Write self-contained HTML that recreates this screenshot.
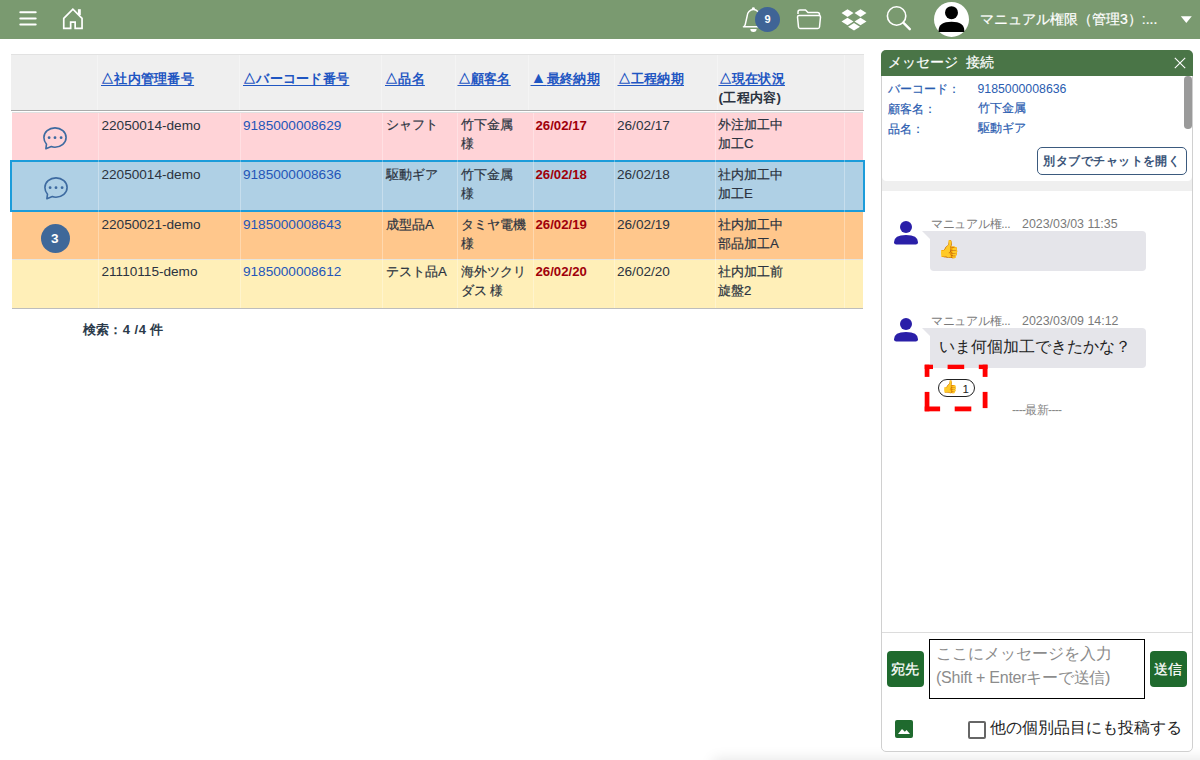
<!DOCTYPE html>
<html><head><meta charset="utf-8">
<style>
*{box-sizing:border-box}
html,body{margin:0;padding:0;width:1200px;height:760px;overflow:hidden;background:#fff;font-family:"Liberation Sans",sans-serif;color:#333}
.j,.jt{-webkit-text-stroke:0.2px currentColor}
.a{position:absolute}
#hdr{position:absolute;left:0;top:0;width:1200px;height:38.6px;background:#7a9a70}
.t{position:absolute;font-size:13.6px;line-height:18px;white-space:nowrap;color:#2b3340}
.j{font-size:13.2px;line-height:18.8px}
.hd{position:absolute;font-size:13.4px;letter-spacing:0.3px;line-height:19px;white-space:nowrap;font-weight:bold}
.hl{color:#1f56c2;text-decoration:underline;text-underline-offset:2px}
.lnk{color:#2356b8}
.red{color:#a0000a;font-weight:bold;font-size:13.2px}
.vs{position:absolute;width:1px;background:rgba(255,255,255,.3)}
.hs{position:absolute;width:1px;background:rgba(255,255,255,.3)}
</style></head><body>
<div id="hdr"></div>
<svg class="a" style="left:0;top:0" width="1200" height="39" viewBox="0 0 1200 39">
  <!-- hamburger -->
  <g stroke="#fff" stroke-width="2" stroke-linecap="round">
    <path d="M20.3 12.3 H35.7 M20.3 18.4 H35.7 M20.3 24.6 H35.7"/>
  </g>
  <!-- home -->
  <path d="M63.75 18.3 L72.9 9.1 L82.05 18.3 V28.35 H75.15 V22.1 H70.65 V28.35 H63.75 Z" fill="none" stroke="#fff" stroke-width="1.7" stroke-linejoin="miter"/>
  <rect x="77.9" y="9.2" width="2.9" height="5.8" fill="#fff"/>
  <!-- bell -->
  <path d="M747.2 15.8 A6.2 6.2 0 0 1 759.6 15.8 L761.6 24.6 Q762 26.3 763.4 26.85 H743.4 Q744.8 26.3 745.2 24.6 Z" fill="none" stroke="#fff" stroke-width="1.5" stroke-linejoin="round"/>
  <path d="M750.3 29.1 H756.6 A3.15 2.9 0 0 1 750.3 29.1 Z" fill="#fff"/>
  <ellipse cx="753.4" cy="8.4" rx="1.5" ry="1.2" fill="#fff"/>
  <!-- folder -->
  <path d="M798 14 V12 Q798 10 800 10 H805.5 L808 12.5 H817.5 Q819.5 12.5 819.5 14.5 V15.5" fill="none" stroke="#fff" stroke-width="1.5"/>
  <path d="M797.5 17 Q797.5 15.5 799 15.5 H819 Q820.5 15.5 820.5 17 L819.5 27 Q819.3 28.5 817.8 28.5 H800.2 Q798.7 28.5 798.5 27 Z" fill="none" stroke="#fff" stroke-width="1.5"/>
  <!-- dropbox -->
  <path d="M847.5 9.3 L853.5 13.1 L847.5 16.9 L841.5 13.1 Z M860.5 9.3 L866.5 13.1 L860.5 16.9 L854.5 13.1 Z M847.5 17.7 L853.5 21.5 L847.5 25.3 L841.5 21.5 Z M860.5 17.7 L866.5 21.5 L860.5 25.3 L854.5 21.5 Z M854 23 L860 26.8 L854 30.6 L848 26.8 Z" fill="#fff"/>
  <!-- search -->
  <circle cx="896.6" cy="16" r="9.2" fill="none" stroke="#fff" stroke-width="1.6"/>
  <path d="M903.3 22.7 L909.8 29.2" stroke="#fff" stroke-width="2.4" stroke-linecap="round"/>
  <!-- avatar -->
  <circle cx="951.5" cy="19.4" r="17.5" fill="#fff"/>
  <circle cx="951.5" cy="12.7" r="6.5" fill="#000"/>
  <path d="M938.6 32 V30.5 Q938.6 21.8 951.5 21.8 Q964.3 21.8 964.3 30.5 V32 Z" fill="#000"/>
  <!-- dropdown -->
  <path d="M1180.8 16.3 H1191.8 L1186.3 22.9 Z" fill="#fff"/>
</svg>
<div class="a" style="left:755px;top:7px;width:25px;height:25px;border-radius:50%;background:#3f6496;color:#fff;font-weight:bold;font-size:11px;line-height:25px;text-align:center">9</div>
<div class="a jt" style="left:980px;top:9px;font-size:14px;line-height:20px;color:#fff;white-space:nowrap">マニュアル権限（管理3）:...</div>

<!-- ===== TABLE ===== -->
<div class="a" style="left:11px;top:54px;width:853px;height:57px;background:#efefef;border-top:1px solid #e2e2e2;border-bottom:1px solid #ababab"></div>
<div class="vs" style="left:97px;top:55px;height:55px"></div>
<div class="vs" style="left:239px;top:55px;height:55px"></div>
<div class="vs" style="left:381px;top:55px;height:55px"></div>
<div class="vs" style="left:454.5px;top:55px;height:55px"></div>
<div class="vs" style="left:527.5px;top:55px;height:55px"></div>
<div class="vs" style="left:614px;top:55px;height:55px"></div>
<div class="vs" style="left:716.5px;top:55px;height:55px"></div>
<div class="vs" style="left:843.5px;top:55px;height:55px"></div>
<div class="hd" style="left:101px;top:68.5px"><span class="hl">△社内管理番号</span></div>
<div class="hd" style="left:243px;top:68.5px"><span class="hl">△バーコード番号</span></div>
<div class="hd" style="left:385px;top:68.5px"><span class="hl">△品名</span></div>
<div class="hd" style="left:457.5px;top:68.5px"><span class="hl">△顧客名</span></div>
<div class="hd" style="left:530.5px;top:68.5px"><span class="hl"><span style="font-size:16px;line-height:10px">▲</span>最終納期</span></div>
<div class="hd" style="left:617.5px;top:68.5px"><span class="hl">△工程納期</span></div>
<div class="hd" style="left:718.5px;top:68.5px"><span class="hl">△現在状況</span><br><span style="color:#2b3340">(工程内容)</span></div>

<!-- rows -->
<div class="a" style="left:12px;top:112px;width:851px;height:48px;background:#ffd3d7;border-top:1px solid #dfe1e1"></div>
<div class="a" style="left:12px;top:212px;width:851px;height:47px;background:#ffc78c"></div>
<div class="a" style="left:12px;top:259px;width:851px;height:50px;background:#ffefb8;border-top:1px solid #e6e4dc;border-bottom:1.5px solid #bdbdbd"></div>
<div class="a" style="left:10px;top:160px;width:854.5px;height:52.2px;background:#afd0e5;border:2.7px solid #1c9cda"></div>
<div class="hs" style="left:98px;top:113px;height:195px"></div>
<div class="hs" style="left:239.5px;top:113px;height:195px"></div>
<div class="hs" style="left:382px;top:113px;height:195px"></div>
<div class="hs" style="left:457px;top:113px;height:195px"></div>
<div class="hs" style="left:532.5px;top:113px;height:195px"></div>
<div class="hs" style="left:614px;top:113px;height:195px"></div>
<div class="hs" style="left:715px;top:113px;height:195px"></div>
<div class="hs" style="left:844px;top:113px;height:195px"></div>

<!-- chat icons -->
<svg class="a" style="left:42px;top:126px" width="27" height="25" viewBox="0 0 27 25">
  <path d="M13 1.9 C19.1 1.9 24.1 6.2 24.1 11.6 C24.1 17 19.1 21.3 13 21.3 C11.7 21.3 10.5 21.15 9.3 20.6 L3.9 22.7 L4.5 18.2 C2.8 16.4 1.9 14.1 1.9 11.6 C1.9 6.2 6.9 1.9 13 1.9 Z" fill="none" stroke="#3d6aa0" stroke-width="1.6" stroke-linejoin="round"/>
  <circle cx="7.1" cy="11.7" r="1.4" fill="#3d6aa0"/><circle cx="13" cy="11.7" r="1.4" fill="#3d6aa0"/><circle cx="19.1" cy="11.7" r="1.4" fill="#3d6aa0"/>
</svg>
<svg class="a" style="left:43px;top:176px" width="27" height="25" viewBox="0 0 27 25">
  <path d="M13 1.9 C19.1 1.9 24.1 6.2 24.1 11.6 C24.1 17 19.1 21.3 13 21.3 C11.7 21.3 10.5 21.15 9.3 20.6 L3.9 22.7 L4.5 18.2 C2.8 16.4 1.9 14.1 1.9 11.6 C1.9 6.2 6.9 1.9 13 1.9 Z" fill="none" stroke="#3d6aa0" stroke-width="1.6" stroke-linejoin="round"/>
  <circle cx="7.1" cy="11.7" r="1.4" fill="#3d6aa0"/><circle cx="13" cy="11.7" r="1.4" fill="#3d6aa0"/><circle cx="19.1" cy="11.7" r="1.4" fill="#3d6aa0"/>
</svg>
<div class="a" style="left:41px;top:224px;width:29px;height:29px;border-radius:50%;background:#3f6899;color:#fff;font-size:13.6px;line-height:29px;text-align:center;font-weight:bold;padding-right:1.5px">3</div>

<!-- row 1 -->
<div class="t" style="left:101.5px;top:116.5px">22050014-demo</div>
<div class="t lnk" style="left:243px;top:116.5px">9185000008629</div>
<div class="t j" style="left:386px;top:116.4px">シャフト</div>
<div class="t j" style="left:460.5px;top:116.4px">竹下金属<br>様</div>
<div class="t red" style="left:535.5px;top:116.5px">26/02/17</div>
<div class="t" style="left:617px;top:116.5px">26/02/17</div>
<div class="t j" style="left:718px;top:116.4px">外注加工中<br>加工C</div>
<!-- row 2 -->
<div class="t" style="left:101.5px;top:166px">22050014-demo</div>
<div class="t lnk" style="left:243px;top:166px">9185000008636</div>
<div class="t j" style="left:386px;top:165.9px">駆動ギア</div>
<div class="t j" style="left:460.5px;top:165.9px">竹下金属<br>様</div>
<div class="t red" style="left:535.5px;top:166px">26/02/18</div>
<div class="t" style="left:617px;top:166px">26/02/18</div>
<div class="t j" style="left:718px;top:165.9px">社内加工中<br>加工E</div>
<!-- row 3 -->
<div class="t" style="left:101.5px;top:216px">22050021-demo</div>
<div class="t lnk" style="left:243px;top:216px">9185000008643</div>
<div class="t j" style="left:386px;top:215.9px">成型品A</div>
<div class="t j" style="left:460.5px;top:215.9px">タミヤ電機<br>様</div>
<div class="t red" style="left:535.5px;top:216px">26/02/19</div>
<div class="t" style="left:617px;top:216px">26/02/19</div>
<div class="t j" style="left:718px;top:215.9px">社内加工中<br>部品加工A</div>
<!-- row 4 -->
<div class="t" style="left:101.5px;top:263px">21110115-demo</div>
<div class="t lnk" style="left:243px;top:263px">9185000008612</div>
<div class="t j" style="left:386px;top:262.9px">テスト品A</div>
<div class="t j" style="left:460.5px;top:262.9px">海外ツクリ<br>ダス 様</div>
<div class="t red" style="left:535.5px;top:263px">26/02/20</div>
<div class="t" style="left:617px;top:263px">26/02/20</div>
<div class="t j" style="left:718px;top:262.9px">社内加工前<br>旋盤2</div>

<div class="t" style="left:82.5px;top:321px;font-weight:bold;font-size:13px;letter-spacing:0.45px;color:#2b3a4a">検索：4 /4 件</div>

<!-- bottom shadow -->
<div class="a" style="left:715px;top:761px;width:600px;height:20px;box-shadow:0 0 14px 2px rgba(0,0,0,.10)"></div>

<!-- ===== CHAT PANEL ===== -->
<div class="a" style="left:881px;top:50px;width:312px;height:702px;border:1px solid #d0d0d0;border-radius:5px;background:#fff">
  <div class="a" style="left:-1px;top:-1px;width:311.5px;height:26px;background:#4a7547;border-radius:5px 5px 0 0"></div>
  <div class="a jt" style="left:6px;top:0.5px;font-size:14px;line-height:20px;color:#fff;white-space:nowrap">メッセージ&nbsp; 接続</div>
  <svg class="a" style="left:291.5px;top:6.3px" width="12" height="12" viewBox="0 0 12 12"><path d="M0.8 0.8 L11.2 11.2 M11.2 0.8 L0.8 11.2" stroke="#fff" stroke-width="1.1"/></svg>
  <div class="a" style="left:0;top:25px;width:310px;height:114.7px;background:#efefef"></div>
  <div class="a" style="left:0;top:25px;width:310px;height:104.5px;background:#fff;border-radius:0 0 4.5px 4.5px"></div>
  <div class="a" style="left:302.2px;top:25.4px;width:7.5px;height:53px;background:#9a9a9a;border-radius:3.75px"></div>
  <div class="a jt" style="left:5.5px;top:27.5px;font-size:12px;line-height:20px;color:#2a5cb0;white-space:nowrap">バーコード：<br>顧客名：<br>品名：</div>
  <div class="a" style="left:95.5px;top:28px;font-size:12.3px;line-height:20px;color:#2a5cb0;white-space:nowrap">9185000008636<br><span class="jt" style="font-size:12px;position:relative;top:-0.7px">竹下金属<br>駆動ギア</span></div>
  <div class="a" style="left:155px;top:95.7px;width:149.8px;height:28.1px;border:1px solid #3b5a7e;border-radius:5px;font-size:12.1px;letter-spacing:0.45px;line-height:26.5px;text-align:center;color:#3a5478;font-weight:bold;white-space:nowrap">別タブでチャットを開く</div>

  <!-- msg 1 -->
  <svg class="a" style="left:11px;top:168.7px" width="26" height="26" viewBox="0 0 26 26"><circle cx="13" cy="7" r="6" fill="#2a1fa8"/><path d="M1 22.3 Q1 15 13 15 Q25 15 25 22.3 Q25 24.6 22.7 24.6 H3.3 Q1 24.6 1 22.3 Z" fill="#2a1fa8"/></svg>
  <div class="a" style="left:49px;top:164.8px;font-size:12px;line-height:16px;color:#7a7a7a;white-space:nowrap;letter-spacing:-0.3px">マニュアル権...</div>
  <div class="a" style="left:140px;top:164.5px;font-size:12.4px;line-height:16px;color:#7a7a7a;white-space:nowrap">2023/03/03 11:35</div>
  <div class="a" style="left:48px;top:180px;width:216px;height:40px;background:#e5e5ea;border-radius:0 4px 4px 4px"></div>
  <div class="a" style="left:40px;top:180px;width:0;height:0;border-top:8px solid #e5e5ea;border-left:8px solid transparent"></div>
  <div class="a" style="left:55.5px;top:187px;font-size:17.5px;line-height:22px">👍</div>

  <!-- msg 2 -->
  <svg class="a" style="left:11px;top:265.7px" width="26" height="26" viewBox="0 0 26 26"><circle cx="13" cy="7" r="6" fill="#2a1fa8"/><path d="M1 22.3 Q1 15 13 15 Q25 15 25 22.3 Q25 24.6 22.7 24.6 H3.3 Q1 24.6 1 22.3 Z" fill="#2a1fa8"/></svg>
  <div class="a" style="left:49px;top:261.8px;font-size:12px;line-height:16px;color:#7a7a7a;white-space:nowrap;letter-spacing:-0.3px">マニュアル権...</div>
  <div class="a" style="left:140px;top:261.5px;font-size:12.4px;line-height:16px;color:#7a7a7a;white-space:nowrap">2023/03/09 14:12</div>
  <div class="a" style="left:48px;top:277px;width:216px;height:40px;background:#e5e5ea;border-radius:0 4px 4px 4px"></div>
  <div class="a" style="left:40px;top:277px;width:0;height:0;border-top:8px solid #e5e5ea;border-left:8px solid transparent"></div>
  <div class="a" style="left:57px;top:285px;font-size:16px;line-height:22px;color:#222;white-space:nowrap">いま何個加工できたかな？</div>
  <!-- reaction -->
  <div class="a" style="left:56.1px;top:328.2px;width:36.7px;height:17.6px;border:1.3px solid #222;border-radius:9px"></div>
  <div class="a" style="left:60px;top:328px;font-size:12.5px;line-height:16px;white-space:nowrap">👍</div>
  <div class="a" style="left:80.5px;top:329.5px;font-size:11.5px;line-height:16px;white-space:nowrap;color:#222">1</div>
  <div class="a" style="left:130px;top:351.3px;font-size:12px;line-height:16px;color:#888;white-space:nowrap;letter-spacing:-0.65px">----最新----</div>

  <!-- bottom input -->
  <div class="a" style="left:0;top:581px;width:310px;height:1px;background:#dcdcdc"></div>
  <div class="a" style="left:5px;top:600px;width:37px;height:36px;border-radius:4px;background:#1f6a2e;color:#fff;font-size:14px;line-height:36.8px;text-align:center;padding-right:1.5px;-webkit-text-stroke:0.25px #fff">宛先</div>
  <div class="a" style="left:47px;top:588px;width:216px;height:60px;border:1.3px solid #000;background:#fff"></div>
  <div class="a" style="left:54px;top:591.25px;font-size:16px;line-height:23.5px;color:#8c8c8c;white-space:nowrap">ここにメッセージを入力<br><span style="letter-spacing:-0.25px">(Shift + Enterキーで送信)</span></div>
  <div class="a" style="left:268px;top:600px;width:37px;height:36px;border-radius:4px;background:#1f6a2e;color:#fff;font-size:14px;line-height:36.8px;text-align:center;padding-right:1.5px;-webkit-text-stroke:0.25px #fff">送信</div>
  <svg class="a" style="left:12.7px;top:669px" width="18" height="18" viewBox="0 0 18 18"><rect x="0" y="0" width="18" height="18" rx="2" fill="#1f6a2e"/><path d="M3 14 L7 9 L9.8 11.8 L11.6 10 L15 14 Z" fill="#fff"/></svg>
  <div class="a" style="left:86px;top:670px;width:18px;height:18px;border:2px solid #666;border-radius:2px"></div>
  <div class="a" style="left:108px;top:666px;font-size:16px;line-height:22px;color:#222;white-space:nowrap">他の個別品目にも投稿する</div>
</div>
<!-- red dashed highlight -->
<svg class="a" style="left:0;top:0" width="1200" height="760" viewBox="0 0 1200 760">
  <g fill="#ff0000">
    <rect x="924.7" y="364.7" width="8.3" height="4.35"/>
    <rect x="947.6" y="364.7" width="16.6" height="4.35"/>
    <rect x="978.8" y="364.7" width="8.7" height="4.35"/>
    <rect x="924.7" y="364.7" width="4.7" height="12.2"/>
    <rect x="924.7" y="391.9" width="4.7" height="19.4"/>
    <rect x="982.7" y="364.7" width="4.8" height="12.2"/>
    <rect x="982.7" y="391.9" width="4.8" height="16.2"/>
    <rect x="924.7" y="406.5" width="15.4" height="4.8"/>
    <rect x="954.7" y="406.5" width="16.6" height="4.8"/>
  </g>
</svg>
</body></html>
